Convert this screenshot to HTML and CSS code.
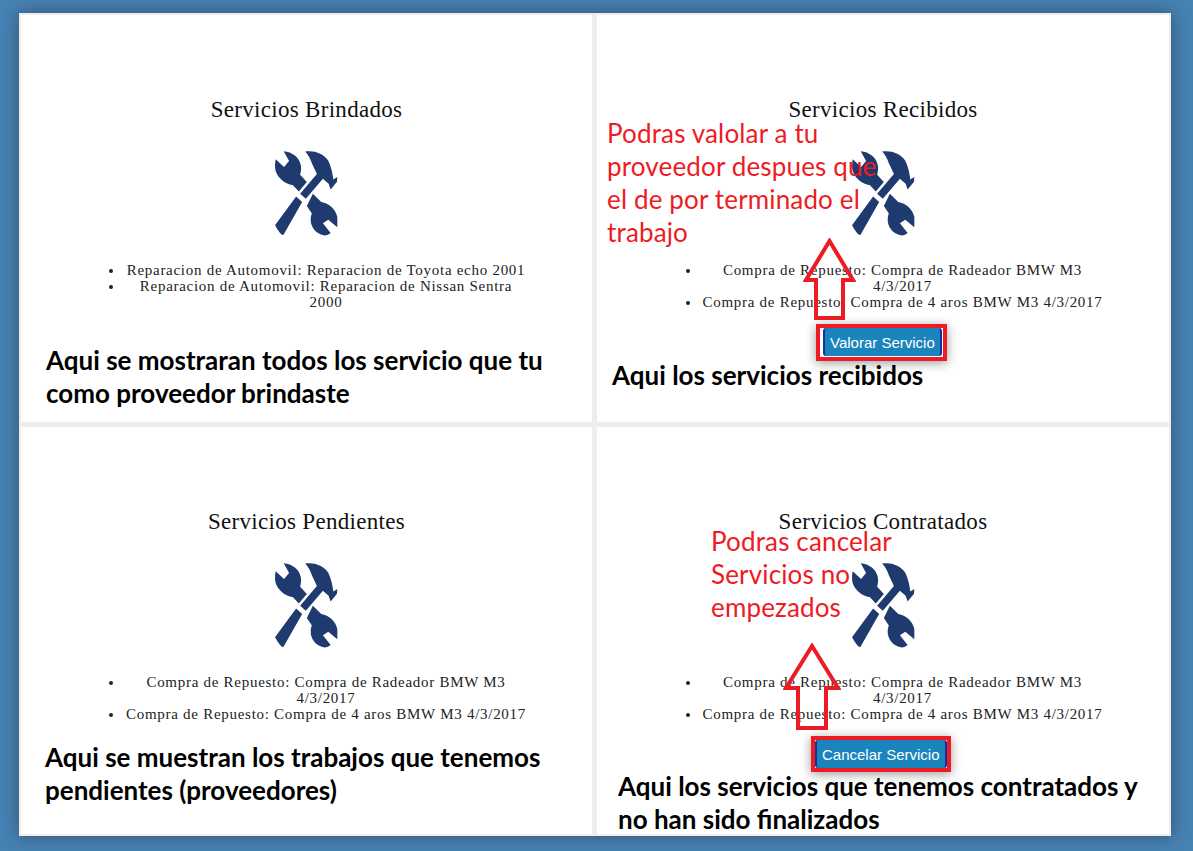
FILE: index.html
```html
<!DOCTYPE html>
<html>
<head>
  <meta charset="utf-8">
  <title>Servicios</title>
  <link rel="stylesheet" href="styles.css">
</head>
<body>
  <svg class="defs" width="0" height="0">
    <symbol id="tools" viewBox="45 33 188 258">
      <path d="M71 36C96 38 118 54 122 78C124 90 122 98 120 106L140 128L116 156L98 137C82 135 60 122 50 102C44 90 44 76 47 60L72 83L87 65Z"/>
      <path d="M158 163L183 187C206 191 226 208 231 232L231 263L204 240L188 251L211 280C206 285 200 287 193 287C170 284 156 268 152 248C151 236 152 228 155 222L140 199Z"/>
      <path d="M45 257L108 171L126 187L70 286C62 286 54 272 45 257Z"/>
      <path d="M120 163L170 104L155 72C150 58 144 46 135 37C160 32 190 42 204 64C211 78 217 100 219 120L231 113L230 127L211 150L205 133L188 118L137 178Z"/>
    </symbol>
  </svg>
  <div class="panel">
    <div class="card">
      <h3 class="title">Servicios Brindados</h3>
      <svg class="tools"><use href="#tools"/></svg>
      <ul class="services">
        <li>Reparacion de Automovil: Reparacion de Toyota echo 2001</li>
        <li>Reparacion de Automovil: Reparacion de Nissan Sentra 2000</li>
      </ul>
      <p class="note note-brindados">Aqui se mostraran todos los servicio que tu como proveedor brindaste</p>
    </div>
    <div class="card">
      <h3 class="title">Servicios Recibidos</h3>
      <svg class="tools"><use href="#tools"/></svg>
      <ul class="services">
        <li>Compra de Repuesto: Compra de Radeador BMW M3 4/3/2017</li>
        <li>Compra de Repuesto: Compra de 4 aros BMW M3 4/3/2017</li>
      </ul>
      <div class="action action-valorar"><button class="btn">Valorar Servicio</button></div>
      <p class="note note-recibidos">Aqui los servicios recibidos</p>
      <p class="hint hint-valorar">Podras valolar a tu proveedor despues que el de por terminado el trabajo</p>
      <svg class="arrow arrow-valorar" viewBox="0 0 53 82"><path d="M26.5 3L3 42H13V80H40V42H50Z"/></svg>
    </div>
    <div class="card">
      <h3 class="title">Servicios Pendientes</h3>
      <svg class="tools"><use href="#tools"/></svg>
      <ul class="services">
        <li>Compra de Repuesto: Compra de Radeador BMW M3 4/3/2017</li>
        <li>Compra de Repuesto: Compra de 4 aros BMW M3 4/3/2017</li>
      </ul>
      <p class="note note-pendientes">Aqui se muestran los trabajos que tenemos pendientes (proveedores)</p>
    </div>
    <div class="card">
      <h3 class="title">Servicios Contratados</h3>
      <svg class="tools"><use href="#tools"/></svg>
      <ul class="services">
        <li>Compra de Repuesto: Compra de Radeador BMW M3 4/3/2017</li>
        <li>Compra de Repuesto: Compra de 4 aros BMW M3 4/3/2017</li>
      </ul>
      <div class="action action-cancelar"><button class="btn">Cancelar Servicio</button></div>
      <p class="note note-contratados">Aqui los servicios que tenemos contratados y no han sido finalizados</p>
      <p class="hint hint-cancelar">Podras cancelar Servicios no empezados</p>
      <svg class="arrow arrow-cancelar" viewBox="0 0 58 87"><path d="M29 3L3 45H15V85H43V45H55Z"/></svg>
    </div>
  </div>
</body>
</html>
```
FILE: styles.css
```css
html, body {
  height: 100%;
}
body {
  margin: 0;
  padding: 13px 22px 15px 19px;
  box-sizing: border-box;
  background: #4682b4;
  overflow: hidden;
}
.defs {
  position: absolute;
}
.panel {
  display: grid;
  grid-template-columns: 571px 572px;
  grid-template-rows: 407px 407px;
  gap: 5px;
  padding: 2px;
  background: #eeeeee;
  box-shadow: 0 0 16px rgba(40, 40, 40, 0.55);
}
.card {
  position: relative;
  background: #fff;
  padding-top: 80px;
  overflow: hidden;
}
.title {
  margin: 0;
  height: 30px;
  font: normal 23px/30px "Liberation Serif", serif;
  letter-spacing: 0.3px;
  color: #111;
  text-align: center;
}
.tools {
  display: block;
  width: 63px;
  height: 87px;
  margin: 25px auto 0;
  fill: #1f3a6e;
  filter: blur(0.4px);
}
.services {
  width: 404px;
  margin: 25px auto 0;
  padding: 0 0 0 39px;
  font: 15px/16px "Liberation Serif", serif;
  letter-spacing: 0.72px;
  color: #222;
  text-align: center;
}
.action {
  width: fit-content;
  border: 4px solid #ed1c24;
  box-shadow: 0 2px 10px rgba(0, 0, 0, 0.4);
  background: #fff;
}
.btn {
  display: block;
  border: 0;
  border-left: 2px solid #1a2f9a;
  border-right: 2px solid #1a2f9a;
  border-radius: 3px;
  height: 28px;
  padding: 0 5px;
  background: #1a84bd;
  color: #fff;
  font: 15px "Liberation Sans", sans-serif;
}
.action-valorar {
  margin: 14px 0 0 219px;
  padding: 0 1px 1px 3px;
}
.action-cancelar {
  margin: 14px 0 0 214px;
}
.note {
  margin: 0;
  font: bold 26px/33px Lato, sans-serif;
  color: #000;
}
.note-brindados {
  margin-top: 34px;
  padding: 0 25px;
}
.note-recibidos {
  margin-top: -2px;
  padding-left: 15px;
}
.note-pendientes {
  margin-top: 19px;
  padding: 0 24px;
}
.note-contratados {
  margin-top: -2px;
  padding: 0 21px;
}
.hint {
  position: absolute;
  margin: 0;
  font: 26px/33px Lato, sans-serif;
  letter-spacing: 0.15px;
  color: #ed1c24;
}
.hint-valorar {
  left: 10px;
  top: 102px;
  width: 275px;
}
.hint-cancelar {
  left: 114px;
  top: 98px;
  width: 200px;
}
.arrow {
  position: absolute;
  fill: none;
  stroke: #ed1c24;
  stroke-width: 4;
}
.arrow-valorar {
  left: 206px;
  top: 223px;
  width: 53px;
  height: 82px;
}
.arrow-cancelar {
  left: 186px;
  top: 216px;
  width: 58px;
  height: 87px;
}
```
